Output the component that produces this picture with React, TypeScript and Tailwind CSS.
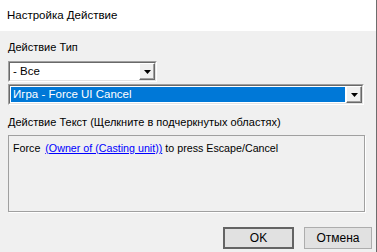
import React from "react";

const font = { fontFamily: '"Liberation Sans", Arial, sans-serif' };

const DropButton = () => (
  <div className="flex h-full w-[16px] shrink-0 items-center justify-center border border-t-white border-l-white border-r-[#696969] border-b-[#696969] bg-[#f0f0f0] shadow-[inset_-1px_-1px_0_#a0a0a0]">
    <svg width="7" height="4" viewBox="0 0 7 4">
      <path d="M0 0h7L3.5 4z" fill="#000" />
    </svg>
  </div>
);

const Combo = ({
  text,
  selected,
  className,
}: {
  text: string;
  selected?: boolean;
  className: string;
}) => (
  <div
    className={`flex h-[21px] border border-t-[#a0a0a0] border-l-[#a0a0a0] border-r-white border-b-white ${className}`}
  >
    <div className="flex flex-1 border border-t-[#696969] border-l-[#696969] border-r-[#e3e3e3] border-b-[#e3e3e3] bg-white">
      <div className="flex flex-1 items-center p-[1px]">
        <div
          className={`flex h-full flex-1 items-center pl-[2px] text-[11.5px] ${
            selected ? "bg-[#0078d7] text-white" : "text-black"
          }`}
        >
          {text}
        </div>
      </div>
      <DropButton />
    </div>
  </div>
);

export default function App() {
  return (
    <div
      className="flex h-[252px] w-[377px] flex-col overflow-hidden border-r border-[#6d6d6d] bg-[#f0f0f0] text-black"
      style={font}
    >
      <div className="flex h-[31px] shrink-0 items-center bg-white pl-[7px] text-[11.5px]">
        Настройка Действие
      </div>
      <div className="flex flex-1 flex-col pl-[8px] pt-[10px]">
        <div className="h-[13px] text-[11px] leading-[13px]">Действие Тип</div>
        <Combo text="- Все" className="mt-[7px] w-[149px]" />
        <Combo
          text="Игра - Force UI Cancel"
          selected
          className="mt-[2px] w-[356px]"
        />
        <div className="mt-[11px] h-[13px] text-[11px] leading-[13px]">
          Действие Текст (Щелкните в подчеркнутых областях)
        </div>
        <div className="mt-[6px] h-[77px] w-[357px] border border-[#a0a0a0] pl-[4px] pt-[4px] text-[10.7px] shadow-[1px_1px_0_#ffffff]">
          Force{" "}
          <span className="ml-[2px] text-[#0000ff] underline">
            (Owner of (Casting unit))
          </span>{" "}
          to press Escape/Cancel
        </div>
        <div className="mt-[15px] flex gap-[10px] pl-[215px]">
          <div className="flex h-[22px] w-[71px] items-center justify-center border-2 border-[#646464] bg-[#e1e1e1] text-[12px]">
            OK
          </div>
          <div className="flex h-[22px] w-[68px] items-center justify-center border border-[#adadad] bg-[#e1e1e1] text-[12px]">
            Отмена
          </div>
        </div>
      </div>
    </div>
  );
}
